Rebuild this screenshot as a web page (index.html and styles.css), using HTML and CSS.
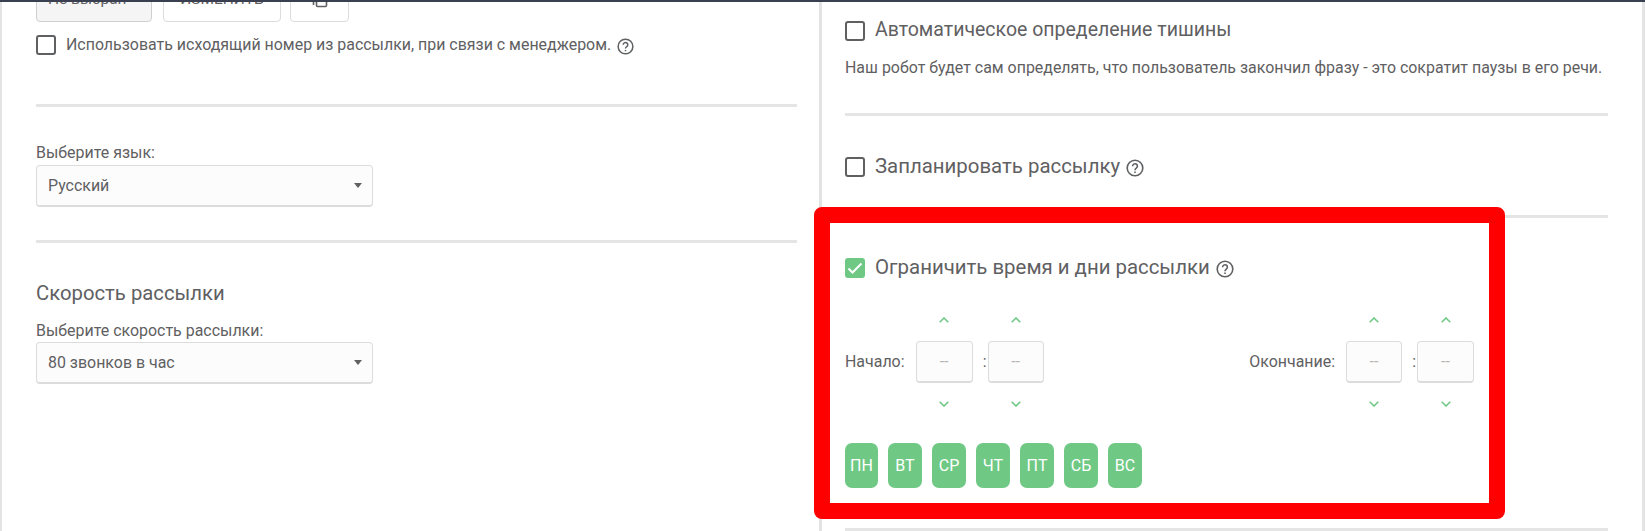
FILE: index.html
```html
<!DOCTYPE html>
<html lang="ru">
  <head>
    <meta charset="UTF-8" />
    <title>Настройки рассылки</title>
    <link rel="stylesheet" href="styles.css">
  </head>

  <body>
    <div class="layout">
      <!-- Left column -->
      <section class="col col-left">
        <div class="button-row">
          <button class="btn btn-muted">Не выбран</button>
          <button class="btn btn-change">ИЗМЕНИТЬ</button>
          <button class="btn btn-copy" aria-label="Копировать">
            <svg width="16" height="18" viewBox="0 0 16 18" fill="none" stroke="#5f6062" stroke-width="1.6">
              <rect x="4.5" y="4.5" width="10" height="12" rx="1" />
              <path d="M1.5 15V2.5a1 1 0 0 1 1-1h8" />
            </svg>
          </button>
        </div>

        <label class="check-row check-row-small check-row-first">
          <span class="checkbox"></span>
          <span>Использовать исходящий номер из рассылки, при связи с менеджером.</span>
          <svg class="help-icon" viewBox="0 0 18 18" fill="none" stroke="#5f6062" stroke-width="1.6">
            <circle cx="9" cy="9" r="7.8" />
            <path d="M6.6 7.2a2.4 2.4 0 1 1 3.7 2c-.9.6-1.3 1-1.3 2" />
            <path d="M9 12.6v1.4" />
          </svg>
        </label>
        <hr class="divider divider-first" />

        <div class="field-label field-label-lang">Выберите язык:</div>
        <div class="select">
          <span>Русский</span>
          <span class="select-arrow"></span>
        </div>
        <hr class="divider divider-lang" />

        <h3 class="section-title">Скорость рассылки</h3>
        <div class="field-label field-label-speed">Выберите скорость рассылки:</div>
        <div class="select select-speed">
          <span>80 звонков в час</span>
          <span class="select-arrow"></span>
        </div>
      </section>

      <!-- Right column -->
      <section class="col col-right">
        <label class="check-row check-row-silence">
          <span class="checkbox"></span>
          <span class="check-title">Автоматическое определение тишины</span>
        </label>
        <p class="hint">Наш робот будет сам определять, что пользователь закончил фразу - это сократит паузы в его речи.</p>
        <hr class="divider divider-silence" />

        <label class="check-row check-row-plan">
          <span class="checkbox"></span>
          <span class="check-title">Запланировать рассылку</span>
          <svg class="help-icon help-icon-big" viewBox="0 0 18 18" fill="none" stroke="#5f6062" stroke-width="1.6">
            <circle cx="9" cy="9" r="7.8" />
            <path d="M6.6 7.2a2.4 2.4 0 1 1 3.7 2c-.9.6-1.3 1-1.3 2" />
            <path d="M9 12.6v1.4" />
          </svg>
        </label>
        <hr class="divider divider-plan" />

        <label class="check-row check-row-limit">
          <span class="checkbox checkbox-on">
            <svg width="16" height="12" viewBox="0 0 16 12" fill="none" stroke="#fff" stroke-width="2">
              <path d="M1.5 6.5l4 4 9-9" />
            </svg>
          </span>
          <span class="check-title">Ограничить время и дни рассылки</span>
          <svg class="help-icon help-icon-big" viewBox="0 0 18 18" fill="none" stroke="#5f6062" stroke-width="1.6">
            <circle cx="9" cy="9" r="7.8" />
            <path d="M6.6 7.2a2.4 2.4 0 1 1 3.7 2c-.9.6-1.3 1-1.3 2" />
            <path d="M9 12.6v1.4" />
          </svg>
        </label>

        <div class="time-row">
          <div class="time-group">
            <span class="time-label">Начало:</span>
            <div class="spinner spinner-a">
              <svg class="chevron" viewBox="0 0 10 6"><path d="M.7 5.3L5 1l4.3 4.3" /></svg>
              <input class="time-input" placeholder="--" />
              <svg class="chevron" viewBox="0 0 10 6"><path d="M.7.7L5 5 9.3.7" /></svg>
            </div>
            <span class="time-colon">:</span>
            <div class="spinner">
              <svg class="chevron" viewBox="0 0 10 6"><path d="M.7 5.3L5 1l4.3 4.3" /></svg>
              <input class="time-input" placeholder="--" />
              <svg class="chevron" viewBox="0 0 10 6"><path d="M.7.7L5 5 9.3.7" /></svg>
            </div>
          </div>

          <div class="time-group">
            <span class="time-label">Окончание:</span>
            <div class="spinner">
              <svg class="chevron" viewBox="0 0 10 6"><path d="M.7 5.3L5 1l4.3 4.3" /></svg>
              <input class="time-input" placeholder="--" />
              <svg class="chevron" viewBox="0 0 10 6"><path d="M.7.7L5 5 9.3.7" /></svg>
            </div>
            <span class="time-colon">:</span>
            <div class="spinner spinner-a">
              <svg class="chevron" viewBox="0 0 10 6"><path d="M.7 5.3L5 1l4.3 4.3" /></svg>
              <input class="time-input" placeholder="--" />
              <svg class="chevron" viewBox="0 0 10 6"><path d="M.7.7L5 5 9.3.7" /></svg>
            </div>
          </div>
        </div>

        <div class="days">
          <button class="day day-first">ПН</button>
          <button class="day">ВТ</button>
          <button class="day">СР</button>
          <button class="day">ЧТ</button>
          <button class="day">ПТ</button>
          <button class="day">СБ</button>
          <button class="day">ВС</button>
        </div>
        <hr class="divider divider-days" />
      </section>
    </div>

    <!-- Red highlight drawn over the page -->
    <div class="highlight"></div>
  </body>
</html>
```

FILE: styles.css
```css
:root {
  --text-color: #5f6062;
  --green: #6fc985;
  --divider: #e5e5e5;
  --border-color: #dcdcdc;
  --frame-color: #e3e3e3;
}

* {
  box-sizing: border-box;
  margin: 0;
  padding: 0;
}

html,
body {
  height: 531px;
  overflow: hidden;
}

body {
  position: relative;
  font-family: Roboto, "Open Sans", sans-serif;
  font-size: 15.95px;
  line-height: 20px;
  color: var(--text-color);
  background-color: #fff;
  border-top: 2px solid #3a3f51;
}

.layout {
  display: grid;
  grid-template-columns: 819px 1fr;
  height: 529px;
}

.col-left {
  border-left: 2px solid var(--frame-color);
  padding: 0 22px 0 34px;
}

.col-right {
  border-left: 3px solid var(--frame-color);
  border-right: 3px solid var(--frame-color);
  padding: 0 34px 0 23px;
}

/* Buttons cut off by the top edge */
.button-row {
  display: flex;
  margin-top: -22px;
}

.btn {
  height: 42px;
  padding-bottom: 4px;
  font-family: inherit;
  font-size: 15.5px;
  color: var(--text-color);
  background-color: #fff;
  border: 1px solid var(--border-color);
  border-radius: 4px;
}

.btn-muted {
  width: 116px;
  padding-left: 11px;
  text-align: left;
  background-color: #f5f5f5;
  border-color: #cfcfcf;
}

.btn-change {
  width: 118px;
  margin-left: 11px;
}

.btn-copy {
  display: flex;
  align-items: center;
  justify-content: center;
  width: 59px;
  margin-left: 9px;
}

/* Checkbox rows */
.check-row {
  display: flex;
  align-items: center;
  height: 20px;
  font-size: 20.4px;
}

.check-row-small {
  font-size: 15.95px;
}

.check-row-first {
  margin-top: 13px;
}

.check-row-silence {
  margin-top: 19px;
  font-size: 19.5px;
}

.check-row-plan {
  margin-top: 41px;
}

.check-row-limit {
  margin-top: 40px;
}

.check-title {
  margin-top: -2px;
}

.checkbox {
  display: flex;
  align-items: center;
  justify-content: center;
  flex: none;
  width: 20px;
  height: 20px;
  margin-right: 10px;
  border: 2px solid #5f6062;
  border-radius: 3px;
}

.checkbox-on {
  background-color: var(--green);
  border: none;
}

.help-icon {
  flex: none;
  width: 17px;
  height: 17px;
  margin-left: 6px;
  margin-top: 3px;
}

.help-icon-big {
  width: 18px;
  height: 18px;
  margin-top: 2px;
}

.divider {
  height: 3px;
  border: none;
  background-color: var(--divider);
}

.divider-first {
  margin-top: 49px;
}

.divider-lang {
  margin-top: 33px;
}

.divider-silence {
  margin-top: 35px;
}

.divider-plan {
  margin-top: 38px;
}

.divider-days {
  margin-top: 40px;
}

/* Select fields */
.field-label-lang {
  margin-top: 36px;
}

.field-label-speed {
  margin-top: 16px;
}

.select {
  display: flex;
  align-items: center;
  justify-content: space-between;
  width: 337px;
  height: 42px;
  margin-top: 2px;
  padding: 0 10px 0 11px;
  background-color: #fcfcfc;
  border: 1px solid var(--border-color);
  border-bottom-width: 2px;
  border-radius: 4px;
}

.select-speed {
  margin-top: 1px;
}

.select-arrow {
  width: 0;
  height: 0;
  border-left: 4.5px solid transparent;
  border-right: 4.5px solid transparent;
  border-top: 5px solid #5f6062;
}

.section-title {
  margin-top: 38px;
  font-size: 20.3px;
  font-weight: 400;
  line-height: 24px;
}

.hint {
  margin-top: 17px;
}

/* Time pickers */
.time-row {
  display: flex;
  justify-content: space-between;
  width: 629px;
  margin-top: 32px;
}

.time-group {
  display: flex;
  align-items: center;
}

.time-label {
  margin-right: 11px;
}

.spinner {
  display: flex;
  flex-direction: column;
  align-items: center;
  width: 56px;
}

.spinner-a {
  width: 57px;
}

.chevron {
  width: 10px;
  height: 6px;
  margin: 7px 0;
  fill: none;
  stroke: var(--green);
  stroke-width: 1.6;
}

.time-input {
  width: 100%;
  height: 42px;
  margin: 11px 0;
  font-family: inherit;
  font-size: 16px;
  text-align: center;
  background-color: #fcfcfc;
  border: 1px solid var(--border-color);
  border-bottom-width: 2px;
  border-radius: 4px;
}

.time-input::placeholder {
  color: #b5b5b5;
}

.time-colon {
  width: 15px;
  padding-right: 1px;
  text-align: right;
}

/* Week days */
.days {
  display: flex;
  gap: 10px;
  margin-top: 29px;
}

.day {
  width: 34px;
  height: 45px;
  font-family: inherit;
  font-size: 16px;
  color: #fff;
  background-color: var(--green);
  border: none;
  border-radius: 7px;
}

.day-first {
  width: 33px;
}

.highlight {
  position: absolute;
  top: 205px;
  left: 814px;
  width: 691px;
  height: 312px;
  border: 16px solid #ff0000;
  border-radius: 8px;
}
```
